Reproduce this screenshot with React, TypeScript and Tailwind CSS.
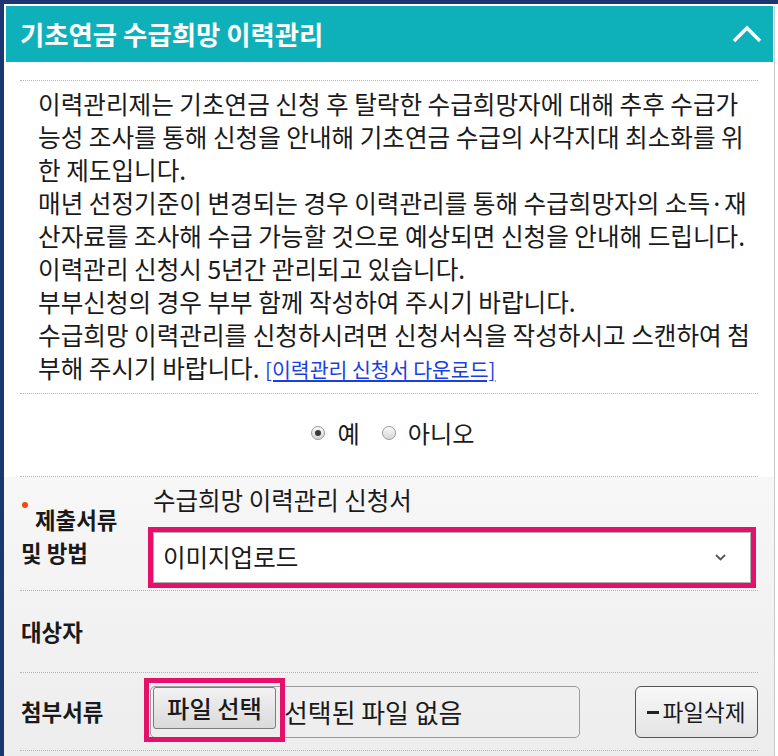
// 기초연금 수급희망 이력관리 - 신청 폼 패널
const FONT = { fontFamily: '"Noto Sans CJK KR", "Noto Sans", sans-serif' };

const lines = [
  '이력관리제는 기초연금 신청 후 탈락한 수급희망자에 대해 추후 수급가',
  '능성 조사를 통해 신청을 안내해 기초연금 수급의 사각지대 최소화를 위',
  '한 제도입니다.',
  '매년 선정기준이 변경되는 경우 이력관리를 통해 수급희망자의 소득·재',
  '산자료를 조사해 수급 가능할 것으로 예상되면 신청을 안내해 드립니다.',
  '이력관리 신청시 5년간 관리되고 있습니다.',
  '부부신청의 경우 부부 함께 작성하여 주시기 바랍니다.',
  '수급희망 이력관리를 신청하시려면 신청서식을 작성하시고 스캔하여 첨',
];

function Divider() {
  return <div className="border-t border-dotted border-[#b4b4b4]" />;
}

function Radio({ checked, label }: { checked: boolean; label: string }) {
  return (
    <label className="flex items-center gap-[12px]">
      <span className="flex h-[14px] w-[14px] items-center justify-center rounded-full border border-[#9a9a9a] bg-gradient-to-b from-[#fafafa] to-[#d6d6d6]">
        {checked && <span className="h-[6px] w-[6px] rounded-full bg-[#3a3a3a]" />}
      </span>
      <span className="text-[24.2px] leading-[30px] text-[#1a1a1a]">{label}</span>
    </label>
  );
}

export default function App() {
  return (
    <div
      className="h-[756px] w-[778px] overflow-hidden border-l-4 border-t-4 border-[#1c3672] bg-white"
      style={FONT}
    >
      <div className="h-full w-[771px] border-r border-[#c9c9c9]">
        {/* 헤더 */}
        <div className="ml-[2px] mr-[1px] mt-[2px] flex h-[56px] items-center justify-between bg-[#0eb0ba] pl-[14px] pr-[11px]">
          <h2 className="text-[26.4px] font-bold leading-none text-white">기초연금 수급희망 이력관리</h2>
          <svg width="30" height="18" viewBox="0 0 30 18" fill="none">
            <polyline points="2,16 15,3 28,16" stroke="white" strokeWidth="3.4" />
          </svg>
        </div>

        {/* 안내문 */}
        <div className="px-[16px] pt-[18px]">
          <Divider />
          <div className="pb-[7px] pl-[18px] pt-[6px] text-[24.6px] leading-[33px] text-[#1a1a1a]">
            {lines.map((line) => (
              <div key={line} className="whitespace-nowrap">
                {line}
              </div>
            ))}
            <div className="whitespace-nowrap">
              부해 주시기 바랍니다.{' '}
              <a href="#" className="text-[20.5px] text-[#1d3fe0] underline">
                [이력관리 신청서 다운로드]
              </a>
            </div>
          </div>
          <Divider />
          <div className="flex h-[82px] items-center justify-center gap-[22px] pb-[4px] pl-[8px]">
            <Radio checked label="예" />
            <Radio checked={false} label="아니오" />
          </div>
          <Divider />
        </div>

        {/* 제출 항목 */}
        <div className="h-full bg-gradient-to-b from-[#f7f7f7] to-[#dcdcdc] px-[16px]">
          <div className="flex h-[113px]">
            <div className="relative w-[128px] pt-[26px] text-[22.4px] font-bold leading-[33px] text-[#1a1a1a]">
              <span className="absolute left-[2px] top-[25px] h-[6px] w-[6px] rounded-full bg-[#f04a10]" />
              <div className="pl-[15px]">제출서류</div>
              <div className="pl-[1px]">및 방법</div>
            </div>
            <div className="flex-1 pr-[2px] pt-[8px]">
              <div className="pl-[5px] text-[24.5px] leading-[30px] text-[#1a1a1a]">수급희망 이력관리 신청서</div>
              <div className="mt-[12px] h-[61px] border-[5px] border-[#e5106a]">
                <div className="flex h-full items-center justify-between border border-[#b0b0b0] bg-white pl-[9px] pr-[24px]">
                  <span className="text-[24.5px] text-[#1a1a1a]">이미지업로드</span>
                  <svg width="11" height="7" viewBox="0 0 11 7" fill="none">
                    <polyline points="1,1 5.5,5.5 10,1" stroke="#555" strokeWidth="1.8" />
                  </svg>
                </div>
              </div>
            </div>
          </div>
          <Divider />

          <div className="flex h-[81px] items-center">
            <div className="w-[128px] pl-[1px] text-[22.4px] font-bold text-[#1a1a1a]">대상자</div>
          </div>
          <Divider />

          <div className="flex h-[77px] items-center">
            <div className="w-[128px] pl-[1px] text-[22.4px] font-bold text-[#1a1a1a]">첨부서류</div>
            <div className="flex flex-1 items-start self-start pt-[13px]">
              <div className="relative ml-[2px] flex h-[52px] w-[430px] items-start rounded-[5px] border border-[#9c9c9c]">
                <button className="ml-[2px] flex h-[42px] w-[123px] items-center justify-center rounded-[3px] border border-[#7d7d7d] bg-gradient-to-b from-[#f2f2f2] to-[#dadada] text-[24.3px] font-medium text-[#1a1a1a]">
                  파일 선택
                </button>
                <span className="ml-[8px] self-center text-[25.9px] text-[#1a1a1a]">선택된 파일 없음</span>
                <span className="absolute -left-[7px] -top-[9px] h-[64px] w-[141px] border-[5px] border-[#e5106a]" />
              </div>
              <button className="ml-[55px] flex h-[52px] w-[123px] items-center justify-center gap-[3px] rounded-[6px] border-[1.5px] border-[#555] bg-gradient-to-b from-[#f8f8f8] to-[#e4e4e4] text-[22.6px] text-[#1a1a1a]">
                <span className="h-[3px] w-[12px] bg-[#222]" />
                파일삭제
              </button>
            </div>
          </div>
          <Divider />
        </div>
      </div>
    </div>
  );
}
